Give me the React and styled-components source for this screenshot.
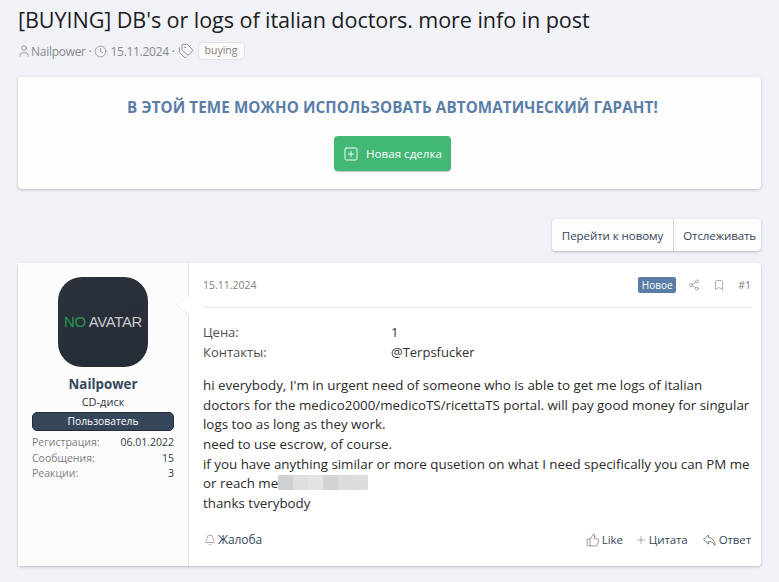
import React from 'react';
import styled, { createGlobalStyle } from 'styled-components';
import { User, Clock, Tags, SquarePlus, Share2, Bookmark, Bell, ThumbsUp, Plus } from 'lucide-react';

const GlobalStyle = createGlobalStyle`
  html, body {
    margin: 0;
    background: #f0f2f7;
    font-family: 'Open Sans', 'Noto Sans', sans-serif;
  }
`;

const Page = styled.div`
  width: 779px;
  height: 582px;
  box-sizing: border-box;
  padding: 6px 18px 0;
  overflow: hidden;
`;

const Title = styled.h1`
  margin: 0;
  font-size: 21.6px;
  line-height: 28px;
  font-weight: 400;
  color: #1d1d25;
  letter-spacing: -0.08px;
`;

const Meta = styled.div`
  display: flex;
  align-items: center;
  height: 20px;
  margin-top: 7px;
  font-size: 12px;
  color: #8a8a8a;
  gap: 3px;
  letter-spacing: -0.28px;
  margin-left: -1px;
  svg { color: #8a8a8a; }
  svg:first-child { margin-right: -3px; }
`;

const Tag = styled.span`
  margin-left: 1px;
  padding: 0 6px;
  height: 16px;
  line-height: 15px;
  border: 1px solid #e3e3e6;
  border-radius: 4px;
  background: #fafafa;
  font-size: 10.5px;
  color: #8a7f7f;
  letter-spacing: 0;
`;

const Card = styled.div`
  background: #fdfdfd;
  border-radius: 4px;
  box-shadow: 0 1px 3px rgba(0, 0, 0, 0.22);
`;

const Escrow = styled(Card)`
  margin-top: 16px;
  height: 112px;
  display: flex;
  flex-direction: column;
  align-items: center;
  padding: 20px 0 0 6px;
  box-sizing: border-box;
`;

const EscrowText = styled.div`
  font-size: 15.2px;
  line-height: 20px;
  font-weight: 700;
  color: #5b7ea8;
  letter-spacing: 0.1px;
`;

const DealButton = styled.div`
  margin-top: 19px;
  width: 117px;
  height: 35px;
  display: flex;
  align-items: center;
  justify-content: center;
  gap: 7px;
  border-radius: 4px;
  background: #43b875;
  box-shadow: 0 1px 1px rgba(0, 0, 0, 0.2);
  color: #fff;
  font-size: 11.6px;
`;

const Actions = styled.div`
  display: flex;
  justify-content: flex-end;
  margin-top: 30px;
`;

const ActionGroup = styled(Card)`
  display: flex;
  height: 32px;
`;

const ActionItem = styled.div`
  padding: 0 10px;
  display: flex;
  align-items: center;
  font-size: 11.6px;
  color: #35465a;
  letter-spacing: -0.1px;
  & + & { border-left: 1px solid #d8d8d8; padding: 0 5px 0 9px; font-size: 11.5px; }
`;

const Post = styled(Card)`
  margin-top: 12px;
  height: 303px;
  display: flex;
  background: #fff;
`;

const UserCol = styled.div`
  position: relative;
  width: 171px;
  box-sizing: border-box;
  padding: 14px 14px 0;
  border-right: 1px solid #e9e9e9;
  background: #fcfcfc;
  display: flex;
  flex-direction: column;
  align-items: center;
  flex-shrink: 0;
`;

const Arrow = styled.div`
  position: absolute;
  top: 32px;
  right: -1px;
  width: 0;
  height: 0;
  border-style: solid;
  border-width: 10px 13px 10px 0;
  border-color: transparent #e9e9e9 transparent transparent;
  &::after {
    content: '';
    position: absolute;
    top: -10px;
    left: 1px;
    border-style: solid;
    border-width: 10px 13px 10px 0;
    border-color: transparent #fff transparent transparent;
  }
`;

const Avatar = styled.div`
  width: 90px;
  height: 90px;
  border-radius: 24px;
  background: linear-gradient(160deg, #2b323c, #262c36);
  display: flex;
  align-items: center;
  justify-content: center;
  font-size: 14.9px;
  font-family: 'Liberation Sans', sans-serif;
  color: #c9cccf;
  letter-spacing: -0.3px;
  white-space: nowrap;
`;

const NoWord = styled.span`
  color: #1f9a4f;
`;

const UserName = styled.div`
  margin-top: 7px;
  font-size: 13.3px;
  line-height: 20px;
  font-weight: 700;
  color: #35465a;
`;

const UserTitle = styled.div`
  font-size: 11px;
  line-height: 16px;
  color: #303640;
`;

const Role = styled.div`
  margin-top: 2px;
  width: 142px;
  height: 19px;
  box-sizing: border-box;
  border: 1px solid #222d3a;
  border-radius: 5px;
  background: #36475b;
  color: #fff;
  font-size: 10.3px;
  line-height: 17px;
  text-align: center;
`;

const Stats = styled.dl`
  margin: 4px 0 0;
  width: 142px;
`;

const Stat = styled.div`
  display: flex;
  justify-content: space-between;
  font-size: 10.5px;
  line-height: 15.5px;
  dt { color: #7d7d7d; }
  dd { margin: 0; color: #333a44; }
`;

const Main = styled.div`
  flex: 1;
  padding: 0 10px 0 14px;
  display: flex;
  flex-direction: column;
`;

const PostHead = styled.div`
  height: 47px;
  display: flex;
  align-items: center;
  justify-content: space-between;
  border-bottom: 1px solid #e8e8e8;
  font-size: 10.5px;
  color: #7d7d7d;
`;

const HeadRight = styled.div`
  display: flex;
  align-items: center;
  gap: 13px;
  svg { color: #8a8a8a; }
`;

const NewBadge = styled.span`
  width: 38px;
  height: 16px;
  line-height: 16px;
  text-align: center;
  border-radius: 2px;
  background: #5b7ea8;
  color: #fff;
  font-size: 10px;
  margin-right: -1px;
`;

const Field = styled.div`
  display: grid;
  grid-template-columns: 188px 1fr;
  font-size: 13px;
  line-height: 20px;
  color: #4f4f4f;
  span:last-child { color: #2f2f2f; }
`;

const Fields = styled.div`
  margin-top: 14px;
`;

const Body = styled.div`
  margin-top: 14px;
  font-size: 13.35px;
  line-height: 19.7px;
  color: #2a2a2a;
`;

const Blur = styled.span`
  display: inline-flex;
  height: 15px;
  vertical-align: -2px;
`;

const BlurCell = styled.i`
  width: 15px;
  height: 15px;
  background: ${({ $c }) => $c};
`;

const Foot = styled.div`
  margin-top: auto;
  height: 56px;
  display: flex;
  align-items: center;
  justify-content: space-between;
  font-size: 11.5px;
  color: #35465a;
`;

const FootGroup = styled.div`
  display: flex;
  align-items: center;
  gap: 14px;
  & > :first-child { margin-right: -2px; }
`;

const FootLink = styled.span`
  display: flex;
  align-items: center;
  gap: 2px;
  letter-spacing: -0.1px;
  svg { color: #7f7f7f; }
`;

const ReportLink = styled(FootLink)`
  font-size: 12px;
  margin-left: 1px;
`;

const BLUR = ['#d0d0d1', '#dfdfdf', '#e3e3e3', '#d3d3d5', '#dcdcdd', '#dddddd'];

const ReplyIcon = () => (
  <svg width="15" height="14" viewBox="0 0 15 14" fill="none" stroke="currentColor" strokeWidth="1">
    <path d="M6.5 2 L1.5 6.5 L6.5 11 V8.5 C9.5 8.5 11.5 9.5 13 12.5 C13 8 10.5 4.8 6.5 4.5 Z" strokeLinejoin="round" />
  </svg>
);

export default function App() {
  return (
    <Page>
      <GlobalStyle />
      <Title>[BUYING] DB's or logs of italian doctors. more info in post</Title>
      <Meta>
        <User size={14} strokeWidth={1.4} /> Nailpower ·
        <Clock size={13} strokeWidth={1.4} /> 15.11.2024 ·
        <Tags size={16} strokeWidth={1.3} />
        <Tag>buying</Tag>
      </Meta>
      <Escrow>
        <EscrowText>В ЭТОЙ ТЕМЕ МОЖНО ИСПОЛЬЗОВАТЬ АВТОМАТИЧЕСКИЙ ГАРАНТ!</EscrowText>
        <DealButton>
          <SquarePlus size={16} strokeWidth={1.4} /> Новая сделка
        </DealButton>
      </Escrow>
      <Actions>
        <ActionGroup>
          <ActionItem>Перейти к новому</ActionItem>
          <ActionItem>Отслеживать</ActionItem>
        </ActionGroup>
      </Actions>
      <Post>
        <UserCol>
          <Arrow />
          <Avatar>
            <span><NoWord>NO</NoWord> AVATAR</span>
          </Avatar>
          <UserName>Nailpower</UserName>
          <UserTitle>CD-диск</UserTitle>
          <Role>Пользователь</Role>
          <Stats>
            <Stat><dt>Регистрация:</dt><dd>06.01.2022</dd></Stat>
            <Stat><dt>Сообщения:</dt><dd>15</dd></Stat>
            <Stat><dt>Реакции:</dt><dd>3</dd></Stat>
          </Stats>
        </UserCol>
        <Main>
          <PostHead>
            <span>15.11.2024</span>
            <HeadRight>
              <NewBadge>Новое</NewBadge>
              <Share2 size={12} strokeWidth={1.3} />
              <Bookmark size={12} strokeWidth={1.3} />
              <span>#1</span>
            </HeadRight>
          </PostHead>
          <Fields>
            <Field><span>Цена:</span><span>1</span></Field>
            <Field><span>Контакты:</span><span>@Terpsfucker</span></Field>
          </Fields>
          <Body>
            hi everybody, I'm in urgent need of someone who is able to get me logs of italian<br />
            doctors for the medico2000/medicoTS/ricettaTS portal. will pay good money for singular<br />
            logs too as long as they work.<br />
            need to use escrow, of course.<br />
            if you have anything similar or more qusetion on what I need specifically you can PM me<br />
            or reach me
            <Blur>{BLUR.map((c, i) => <BlurCell key={i} $c={c} />)}</Blur><br />
            thanks tverybody
          </Body>
          <Foot>
            <ReportLink><Bell size={12} strokeWidth={1.3} />Жалоба</ReportLink>
            <FootGroup>
              <FootLink><ThumbsUp size={14} strokeWidth={1.3} />Like</FootLink>
              <FootLink><Plus size={12} strokeWidth={1.3} />Цитата</FootLink>
              <FootLink><ReplyIcon />Ответ</FootLink>
            </FootGroup>
          </Foot>
        </Main>
      </Post>
    </Page>
  );
}
